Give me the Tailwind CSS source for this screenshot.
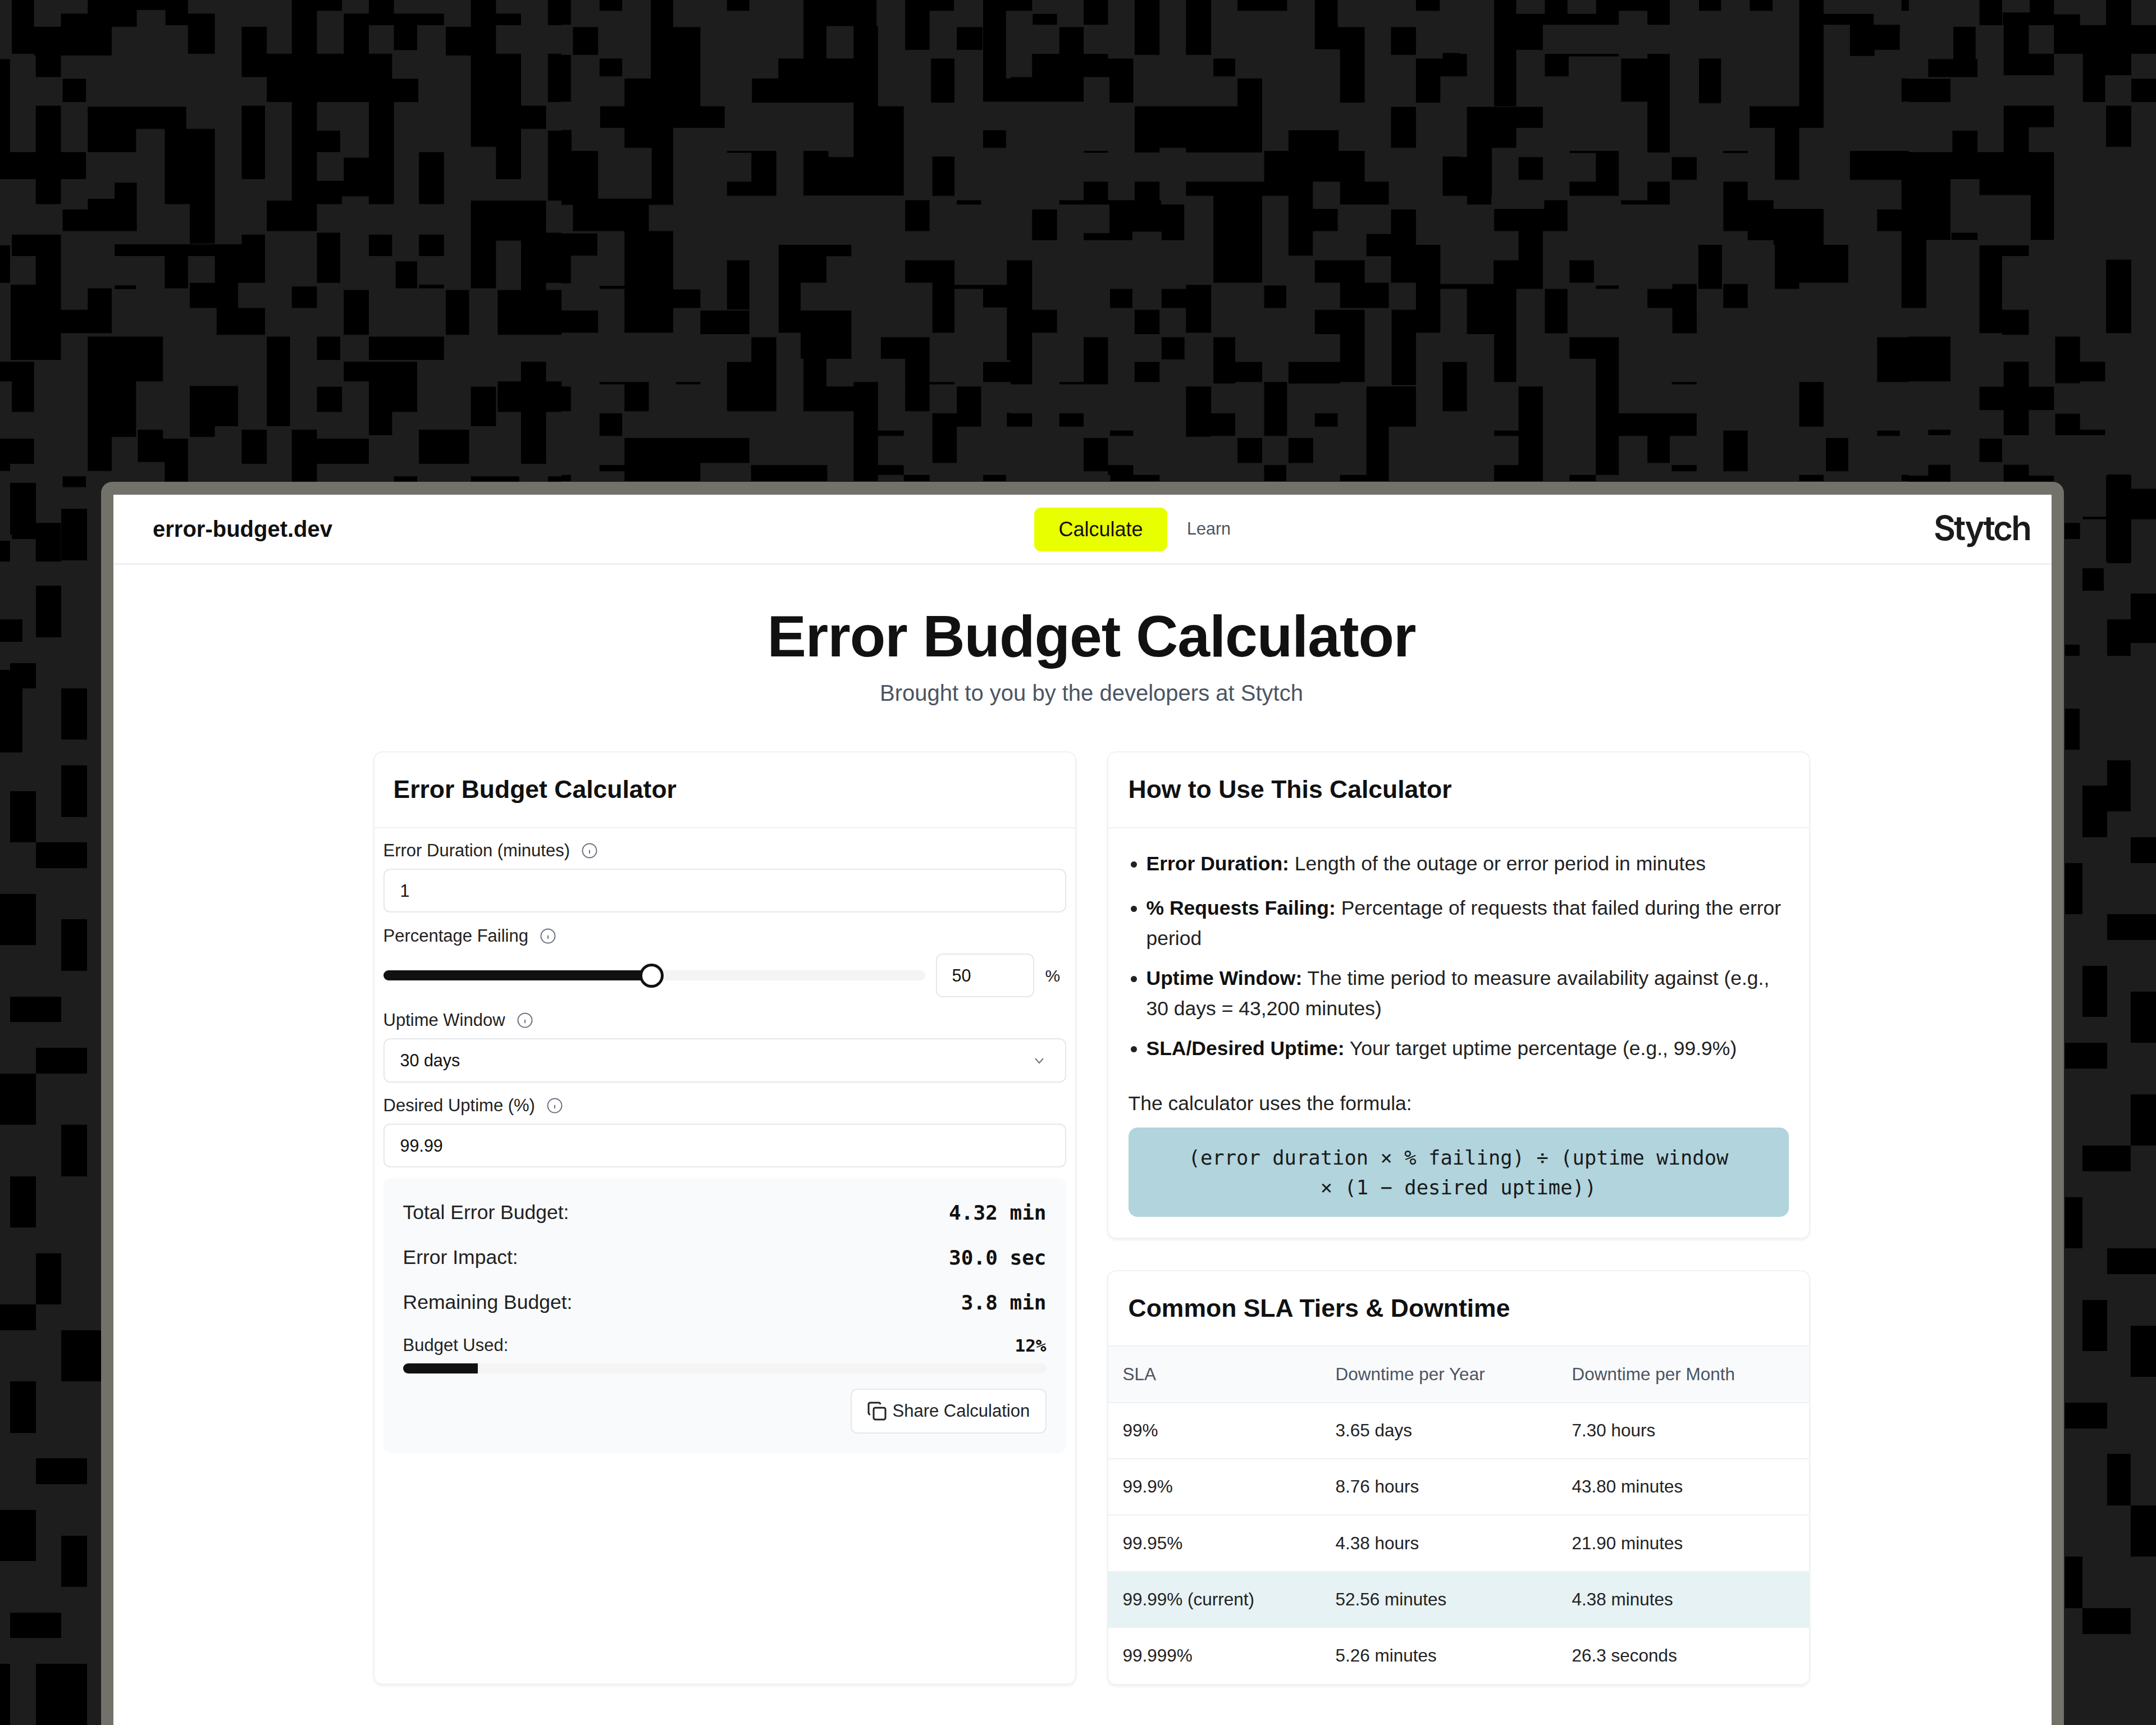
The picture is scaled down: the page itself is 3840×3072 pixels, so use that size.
<!DOCTYPE html>
<html lang="en">
<head>
    <meta charset="UTF-8">
    <title>Error Budget Calculator</title>
    <script src="https://cdn.jsdelivr.net/npm/@tailwindcss/browser@4"></script>
</head>
<body class="bg-[#1d1d1d] font-['Liberation_Sans',sans-serif] text-[#111111]">
<div class="relative h-[3072px] w-[3840px] overflow-hidden">
    <!-- background tiles, drawn by the script at the bottom -->
    <svg id="tiles" class="absolute inset-0" width="3840" height="3072" viewBox="0 0 3840 3072"></svg>

    <div class="relative ml-[180px] mt-[858px] h-[2214px] w-[3496px] rounded-t-[20px] bg-[#72726b] px-[22px] pt-[23px]">
        <div class="h-full bg-white">
            <!-- Nav -->
            <header class="relative flex h-[125px] items-center justify-between border-b-[3px] border-[#f0f0f5] pl-[70px] pr-[38px]">
                <span class="text-[40px] font-bold text-[#111111]">error-budget.dev</span>
                <nav class="absolute left-[1640px] top-[23px] flex items-center">
                    <span class="flex h-[78px] w-[237px] items-center justify-center rounded-[12px] bg-[#e8ff00] text-[36px] text-[#111111]">Calculate</span>
                    <span class="ml-[35px] -mt-[2px] text-[30.5px] text-[#4b5563]">Learn</span>
                </nav>
                <span class="-mt-[4px] font-['Inter',sans-serif] text-[60px] font-semibold tracking-[-0.05em] text-[#1b1b1b]">Stytch</span>
            </header>

            <div class="pl-[32px]">
                <!-- Title -->
                <div class="flex flex-col items-center">
                    <h1 class="mt-[65px] text-[104px] font-bold leading-[124px] tracking-[-0.01em] text-[#111111]">Error Budget Calculator</h1>
                    <p class="mt-[11px] text-[40px] leading-[56px] text-[#4b5563]">Brought to you by the developers at Stytch</p>
                </div>

                <div class="mx-auto mt-[76px] grid w-[2559px] grid-cols-2 gap-[55px]">
                    <!-- Calculator card -->
                    <section class="h-[1662px] rounded-[16px] border-2 border-[#f0f1f3] shadow-[0_3px_4px_rgba(0,0,0,0.06)]">
                        <div class="flex h-[135px] items-center border-b-2 border-[#eef0f3] pl-[34px]">
                            <h2 class="text-[44.5px] font-bold text-[#111111]">Error Budget Calculator</h2>
                        </div>
                        <div class="px-[16px]">
                            <label class="mt-[20px] flex h-[40px] items-center text-[31px] text-[#222222]">Error Duration (minutes)
                                <svg class="ml-[20px]" width="30" height="30" viewBox="0 0 24 24" fill="none" stroke="#6b7280" stroke-width="1.6"><circle cx="12" cy="12" r="10"/><path d="M12 16v-5M12 8h.01"/></svg>
                            </label>
                            <input value="1" class="mt-[12px] block h-[78px] w-full rounded-[12px] border-2 border-[#e5e7eb] pl-[28px] text-[30.5px] text-[#111111]">

                            <label class="mt-[22px] flex h-[40px] items-center text-[31px] text-[#222222]">Percentage Failing
                                <svg class="ml-[20px]" width="30" height="30" viewBox="0 0 24 24" fill="none" stroke="#6b7280" stroke-width="1.6"><circle cx="12" cy="12" r="10"/><path d="M12 16v-5M12 8h.01"/></svg>
                            </label>
                            <div class="mt-[11px] flex h-[78px] items-center">
                                <div class="relative h-[18px] w-[965px] rounded-full bg-[#f4f4f5]">
                                    <div class="h-full w-[478px] rounded-l-full bg-[#111111]"></div>
                                    <div class="absolute left-[456px] top-[-12px] h-[43px] w-[43px] rounded-full border-[5px] border-[#111111] bg-white"></div>
                                </div>
                                <input value="50" class="ml-[19px] h-[78px] w-[175px] rounded-[12px] border-2 border-[#e5e7eb] pl-[27px] text-[30.5px] text-[#111111]">
                                <span class="ml-[20px] text-[30px] text-[#222222]">%</span>
                            </div>

                            <label class="mt-[21px] flex h-[40px] items-center text-[31px] text-[#222222]">Uptime Window
                                <svg class="ml-[20px]" width="30" height="30" viewBox="0 0 24 24" fill="none" stroke="#6b7280" stroke-width="1.6"><circle cx="12" cy="12" r="10"/><path d="M12 16v-5M12 8h.01"/></svg>
                            </label>
                            <div class="mt-[12px] flex h-[79px] items-center justify-between rounded-[12px] border-2 border-[#e5e7eb] pl-[28px] pr-[34px] text-[30.5px] text-[#111111]">
                                <span>30 days</span>
                                <svg width="24" height="24" viewBox="0 0 24 24" fill="none" stroke="#6b7280" stroke-width="2"><path d="M5 8l7 8 7-8"/></svg>
                            </div>

                            <label class="mt-[21px] flex h-[40px] items-center text-[31px] text-[#222222]">Desired Uptime (%)
                                <svg class="ml-[20px]" width="30" height="30" viewBox="0 0 24 24" fill="none" stroke="#6b7280" stroke-width="1.6"><circle cx="12" cy="12" r="10"/><path d="M12 16v-5M12 8h.01"/></svg>
                            </label>
                            <input value="99.99" class="mt-[12px] block h-[78px] w-full rounded-[12px] border-2 border-[#e5e7eb] pl-[28px] text-[30.5px] text-[#111111]">

                            <!-- Results -->
                            <div class="mt-[19px] h-[490px] rounded-[14px] bg-[#f9fafb] px-[35px] pt-[42px]">
                                <div class="flex h-[40px] items-center justify-between text-[35.5px] text-[#222222]"><span>Total Error Budget:</span><span class="font-['DejaVu_Sans_Mono',monospace] text-[36px] font-bold text-[#111111]">4.32 min</span></div>
                                <div class="mt-[40px] flex h-[40px] items-center justify-between text-[35.5px] text-[#222222]"><span>Error Impact:</span><span class="font-['DejaVu_Sans_Mono',monospace] text-[36px] font-bold text-[#111111]">30.0 sec</span></div>
                                <div class="mt-[40px] flex h-[40px] items-center justify-between text-[35.5px] text-[#222222]"><span>Remaining Budget:</span><span class="font-['DejaVu_Sans_Mono',monospace] text-[36px] font-bold text-[#111111]">3.8 min</span></div>
                                <div class="mt-[36px] flex h-[40px] items-center justify-between text-[31px] text-[#222222]"><span>Budget Used:</span><span class="font-['DejaVu_Sans_Mono',monospace] text-[31px] font-bold text-[#111111]">12%</span></div>
                                <div class="mt-[12px] h-[18px] rounded-full bg-[#f4f4f5]"><div class="h-full w-[133px] rounded-l-full bg-[#111111]"></div></div>
                                <div class="mt-[27px] flex justify-end">
                                    <div class="flex h-[80px] w-[349px] items-center rounded-[12px] border-2 border-[#e5e7eb] bg-white pl-[27px] text-[31px] text-[#222222]">
                                        <svg class="mr-[10px]" width="36" height="36" viewBox="0 0 24 24" fill="none" stroke="#222222" stroke-width="2"><rect x="8" y="8" width="14" height="14" rx="2"/><path d="M4 16c-1.1 0-2-.9-2-2V4c0-1.1.9-2 2-2h10c1.1 0 2 .9 2 2"/></svg>
                                        Share Calculation
                                    </div>
                                </div>
                            </div>
                        </div>
                    </section>

                    <div class="flex flex-col gap-[56px]">
                        <!-- How to -->
                        <section class="h-[868px] rounded-[16px] border-2 border-[#f0f1f3] shadow-[0_3px_4px_rgba(0,0,0,0.06)]">
                            <div class="flex h-[135px] items-center border-b-2 border-[#eef0f3] pl-[36px]">
                                <h2 class="text-[44.5px] font-bold text-[#111111]">How to Use This Calculator</h2>
                            </div>
                            <div class="px-[36px] pt-[36px]">
                                <ul class="flex list-disc flex-col gap-[17px] pl-[32px] text-[35.5px] leading-[54px] text-[#222222]">
                                    <li class="mb-[8px]"><b class="text-[#111111]">Error Duration:</b> Length of the outage or error period in minutes</li>
                                    <li><b class="text-[#111111]">% Requests Failing:</b> Percentage of requests that failed during the error period</li>
                                    <li><b class="text-[#111111]">Uptime Window:</b> The time period to measure availability against (e.g., 30 days = 43,200 minutes)</li>
                                    <li><b class="text-[#111111]">SLA/Desired Uptime:</b> Your target uptime percentage (e.g., 99.9%)</li>
                                </ul>
                                <p class="mt-[44px] text-[35.5px] leading-[54px] text-[#222222]">The calculator uses the formula:</p>
                                <div class="mt-[16px] flex h-[159px] items-center justify-center rounded-[16px] bg-[#b1d4dd] px-[90px] text-center font-['DejaVu_Sans_Mono',monospace] text-[35.5px] leading-[53px] text-[#1a1a1a]">
                                    (error duration × % failing) ÷ (uptime window × (1 − desired uptime))
                                </div>
                            </div>
                        </section>

                        <!-- SLA table -->
                        <section class="overflow-hidden rounded-[16px] border-2 border-[#f0f1f3] shadow-[0_3px_4px_rgba(0,0,0,0.06)]">
                            <div class="flex h-[132px] items-center pl-[36px]">
                                <h2 class="text-[44.5px] font-bold text-[#111111]">Common SLA Tiers &amp; Downtime</h2>
                            </div>
                            <table class="w-full table-fixed text-left text-[31.5px] text-[#222222]">
                                <thead class="bg-[#f9fafb] text-[#4b5563]">
                                    <tr class="h-[101px] border-y-2 border-[#eef0f3]"><th class="w-[405px] pl-[26px] font-normal">SLA</th><th class="w-[421px] font-normal">Downtime per Year</th><th class="font-normal">Downtime per Month</th></tr>
                                </thead>
                                <tbody>
                                    <tr class="h-[100px] border-b-2 border-[#eef0f3]"><td class="pl-[26px]">99%</td><td>3.65 days</td><td>7.30 hours</td></tr>
                                    <tr class="h-[100px] border-b-2 border-[#eef0f3]"><td class="pl-[26px]">99.9%</td><td>8.76 hours</td><td>43.80 minutes</td></tr>
                                    <tr class="h-[100px]"><td class="pl-[26px]">99.95%</td><td>4.38 hours</td><td>21.90 minutes</td></tr>
                                    <tr class="h-[101px] bg-[#e7f2f4]"><td class="pl-[26px]">99.99% (current)</td><td>52.56 minutes</td><td>4.38 minutes</td></tr>
                                    <tr class="h-[100px]"><td class="pl-[26px]">99.999%</td><td>5.26 minutes</td><td>26.3 seconds</td></tr>
                                </tbody>
                            </table>
                        </section>
                    </div>
                </div>
            </div>
        </div>
    </div>
</div>

<script>
    // black tiles per strip: x offset, x scale, y scale, then x1 y1 x2 y2 as read off the reference
    const strips = [
        [0, .6378, .6378, "33 0 95 150,95 75 312 155,170 38 312 75,245 0 525 28,245 28 382 75,462 28 525 70,525 38 600 150,815 0 955 30,815 30 885 150,1030 0 1100 38,960 38 1240 70,960 70 1030 150,1100 70 1165 140,1245 75 1315 155,1315 0 1385 410,1385 38 1455 70,1385 150 1455 500,1455 295 1525 360,1530 0 1568 70,1530 150 1568 285,1530 365 1568 560,0 165 28 425,100 155 170 215,175 220 240 285,675 75 745 215,745 150 1095 220,745 220 1168 285,100 295 170 425,245 298 520 360,245 360 380 425,460 360 600 570,675 295 740 500,815 285 885 590,885 365 950 425,960 440 1100 505,1030 285 1100 570,1170 425 1240 570,815 505 955 570,955 505 1030 548,0 425 240 500,100 500 170 570,320 510 382 585,175 585 382 645,245 555 320 585,530 570 600 680,745 560 885 645,1315 560 1385 805,1385 560 1525 672,1455 580 1525 935,1525 650 1568 790,33 655 170 715,0 685 28 790,100 715 170 795,30 795 170 930,170 865 312 930,245 805 312 865,320 682 740 715,460 715 525 805,600 715 740 790,530 790 665 860,605 860 740 935,675 655 740 682,885 650 950 790,1030 655 1095 715,1170 655 1240 715,1105 730 1165 805,1170 795 1240 805,815 800 885 860,960 810 1030 935,1245 810 1310 935,1390 810 1568 935,320 797 380 807,30 930 170 1005,245 940 455 1065,245 1065 380 1220,245 1220 312 1315,385 1225 525 1290,385 1200 455 1225,460 1290 525 1345,0 1010 95 1065,33 1065 95 1150,530 1078 665 1190,530 1190 600 1220,745 940 810 1190,885 940 950 1005,1030 940 1240 1005,960 1010 1165 1065,1030 1065 1165 1150,885 1080 955 1150,1030 1150 1095 1215,1390 1065 1568 1150,1315 1080 1385 1190,1455 1010 1525 1080,1455 1150 1525 1295,675 1200 745 1295,815 1200 885 1345,885 1225 1030 1295,1170 1200 1310 1295,0 1225 95 1295,0 1295 28 1315,175 1330 240 1360,33 1368 95 1460,33 1460 170 1505,100 1505 170 1568,175 1445 240 1452,0 1510 28 1568,1100 1330 1165 1345,1315 1330 1450 1345,1530 1330 1568 1345"],
        [1000, .5102, .5485, "0 0 33 80,133 0 212 35,40 88 128 178,312 0 390 88,312 88 485 255,220 255 485 345,135 345 570 415,220 415 390 480,315 480 390 665,0 178 33 330,133 190 212 248,0 422 35 490,0 490 128 665,128 645 390 665,40 665 305 750,0 758 125 830,0 830 33 920,220 750 390 940,390 940 485 1000,133 928 220 938,220 940 390 1080,0 1008 128 1080,578 0 656 35,845 0 1100 85,845 85 925 190,1020 85 1105 345,757 190 1020 255,665 255 1020 333,1020 345 1195 635,845 490 932 635,932 510 1020 635,1200 0 1370 35,1200 35 1285 162,1380 88 1470 162,1472 0 1552 330,1552 255 1568 330,1552 0 1568 35,1290 190 1372 333,1472 423 1552 480,1295 508 1372 636,663 490 750 590,578 590 750 636,578 490 663 496,1200 650 1285 750,1380 650 1465 664,758 795 1012 832,758 832 925 918,758 918 835 1080,835 1008 1012 1165,845 1080 925 1335,925 1255 1020 1335,1020 1240 1105 1562,578 845 656 1005,485 1008 656 1085,1200 845 1372 918,1295 918 1372 1080,1372 925 1568 938,1472 938 1568 998,1555 845 1568 925,1555 998 1568 1170,663 1095 750 1175,578 1175 750 1335,1115 1095 1285 1165,1200 1165 1285 1335,1472 1175 1568 1240,0 1255 33 1335,133 1240 305 1248,220 1248 305 1335,400 1240 485 1248,1285 1240 1372 1248,1380 1255 1465 1385,1295 1342 1380 1503,1555 1340 1568 1385,133 1342 212 1415,220 1422 656 1503,220 1503 485 1562,133 1510 220 1530,662 1510 928 1562,1105 1398 1195 1415,1105 1510 1195 1542,1195 1542 1285 1562,1472 1542 1552 1562,0 1542 33 1562"],
        [1800, .5102, .5485, "0 0 75 35,77 45 162 80,255 0 340 80,170 88 255 175,75 175 340 190,75 190 428 250,0 250 255 330,345 250 428 333,433 0 520 178,612 0 700 178,792 0 965 35,1062 0 1142 160,1142 88 1236 160,1150 160 1236 333,1415 0 1498 35,1328 88 1415 178,1415 190 1568 248,1508 172 1568 190,1415 248 1500 333,708 190 784 248,792 255 878 345,433 345 520 495,520 345 612 480,612 345 878 495,1328 347 1415 480,970 423 1145 490,885 490 1236 590,612 590 885 636,885 590 1055 636,1150 590 1320 664,970 636 1055 830,1055 678 1142 750,708 636 878 918,255 590 340 664,433 590 520 664,170 650 525 664,345 664 606 752,255 757 345 780,345 752 425 780,527 752 606 780,75 680 162 780,255 490 340 496,1508 508 1568 636,1328 680 1415 760,1242 760 1415 832,1328 832 1500 918,1415 795 1500 1080,1500 922 1568 938,1330 1006 1415 1250,1242 1255 1415 1385,1242 1385 1320 1562,1062 845 1236 918,1150 918 1320 1000,1062 1006 1236 1085,1150 1085 1236 1240,970 1175 1150 1245,0 845 75 1248,75 1006 162 1080,347 938 425 1000,527 938 612 1000,612 925 700 1080,433 1006 520 1085,885 927 962 1000,527 1095 607 1167,255 1095 340 1248,170 1240 255 1248,433 1175 520 1240,708 1095 784 1245,784 1175 878 1240,885 1240 965 1415,612 1255 700 1418,700 1342 784 1415,0 1342 75 1385,170 1342 255 1385,1062 1342 1142 1385,347 1398 428 1415,255 1422 340 1530,340 1510 428 1542,348 1542 520 1562,792 1422 878 1503,970 1422 1056 1503,885 1510 962 1562,1150 1542 1242 1562,1508 1175 1568 1335"],
        [2600, .5102, .5485, "120 0 197 345,197 45 555 80,297 0 376 45,476 0 733 35,476 35 555 45,655 35 733 80,197 80 290 162,835 0 912 35,1012 0 1092 35,1185 0 1270 415,1270 45 1445 80,1362 80 1536 162,1362 162 1448 182,1542 0 1568 35,0 175 25 248,297 175 380 248,380 175 555 183,563 190 733 330,655 175 733 495,835 190 912 335,1542 255 1568 330,25 347 290 415,25 415 197 480,0 510 112 636,25 480 112 510,25 636 110 664,1012 345 1185 415,1100 415 1185 584,383 490 555 497,475 497 555 590,383 590 555 636,205 510 290 584,740 510 827 584,920 490 1005 497,655 590 733 650,563 650 733 664,1362 490 1568 584,1542 584 1568 680,1457 680 1568 750,1542 750 1568 1000,920 590 1005 750,1005 650 1095 780,1095 678 1270 795,1100 795 1356 918,1100 918 1185 938,120 678 295 750,295 650 376 750,205 750 290 845,118 845 290 938,0 922 118 938,25 938 197 1085,120 1085 197 1240,383 845 468 918,475 927 555 938,297 938 376 1082,833 795 915 938,742 922 827 1082,655 938 742 1000,920 922 1005 1000,383 1095 555 1165,475 1165 555 1542,383 1542 475 1562,1457 1095 1568 1240,0 1175 25 1335,740 1240 827 1248,1185 1240 1270 1385,205 1255 290 1562,120 1398 205 1415,120 1510 205 1562,555 1342 827 1415,655 1415 733 1503,920 1398 1005 1530,1278 1422 1356 1530,1457 1398 1536 1415,740 1510 827 1530,1185 1542 1270 1562,1542 1542 1568 1562"],
        [3300, .3444, .6378, "655 0 772 70,775 35 1040 70,915 0 1040 35,780 70 910 210,910 150 1040 210,1040 40 1175 70,1040 70 1568 150,1190 150 1305 285,1310 0 1440 75,1305 150 1440 210,1440 220 1568 285,1310 295 1440 410,520 75 635 165,390 165 645 215,290 220 505 285,780 295 1040 355,780 355 910 425,515 365 645 425,290 425 1040 500,920 500 1040 670,655 500 920 545,290 500 505 585,290 585 505 670,510 650 645 670,290 645 380 860,655 685 910 715,655 715 772 930,772 865 910 935,1310 725 1440 930,290 940 505 1065,1047 940 1175 1070,1175 1010 1305 1065,780 1010 910 1080,655 1080 1040 1145,780 1145 910 1215,1047 1155 1175 1215,1175 1200 1305 1215,390 1200 505 1215,655 1225 772 1290,390 1298 505 1345,290 1328 390 1345,780 1298 910 1345,910 1328 1040 1345,1310 1328 1440 1450,1440 1365 1568 1450,1190 1443 1310 1450,1310 1450 1440 1568,1095 1460 1175 1505"],
        // side strips beside the window
        [0, 1, 1, "0 1103 40 1143,0 1193 40 1340,18 860 64 952,109 906 155 998,64 1043 109 1135,18 1181 64 1226,109 1226 155 1317,18 1409 64 1500,64 1500 155 1546,109 1363 155 1455,0 1592 64 1683,109 1637 155 1729,18 1775 109 1820,64 1866 155 1912,0 1912 64 2003,109 2003 155 2095,18 2095 64 2186,64 2232 109 2323,0 2323 64 2369,109 2369 180 2460,18 2460 64 2552,64 2597 155 2643,0 2689 64 2780,109 2735 155 2826,18 2872 109 2917,64 2963 155 3072,0 2963 18 3072"],
        [3654, 1, 1, "24 78 50 106,55 158 93 198,99 -9 141 149,141 19 186 66,99 249 186 291,141 203 186 249,24 294 50 314,99 291 141 314,24 408 50 481,99 500 141 591,55 545 99 637,141 637 186 683,24 683 55 774,99 774 186 820,55 866 99 957,141 912 186 1003,24 1003 99 1049,141 1095 186 1186,55 1186 141 1232,24 1278 55 1369,99 1369 186 1415,55 1461 99 1552,141 1507 186 1598,24 1644 99 1690,99 1735 141 1827,141 1827 186 1918,24 1918 55 2010,55 2010 141 2056"]
    ];
    let d = "";
    for (const [ox, sx, sy, list] of strips) {
        for (const r of list.split(",")) {
            const [a, b, c, e] = r.trim().split(" ").map(Number);
            const x1 = ox + a * sx, x2 = ox + c * sx;
            // the right strip is measured from the top of the window
            const off = ox === 3654 ? 854 : 0;
            const y1 = b * sy + off, y2 = e * sy + off;
            d += `M${x1} ${y1}H${x2}V${y2}H${x1}Z`;
        }
    }
    const p = document.createElementNS("http://www.w3.org/2000/svg", "path");
    p.setAttribute("d", d);
    p.setAttribute("fill", "#000");
    document.getElementById("tiles").appendChild(p);
</script>
</body>
</html>
